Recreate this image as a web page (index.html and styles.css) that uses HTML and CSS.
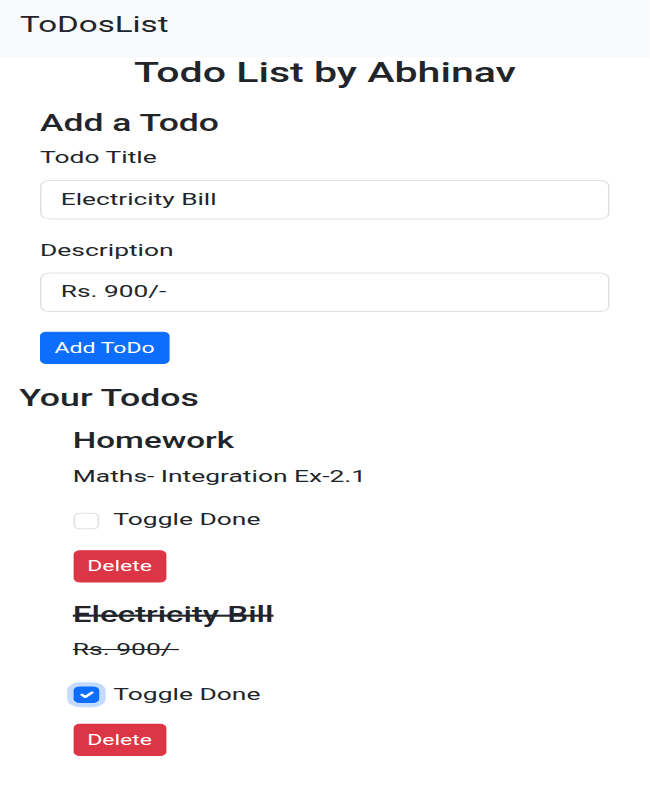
FILE: index.html
```html
<!DOCTYPE html>
<html lang="en">
<head>
<meta charset="utf-8">
<title>ToDosList</title>
<link rel="stylesheet" href="styles.css">
</head>
<body>
<div class="page">
  <nav class="navbar">
    <span class="brand">ToDosList</span>
  </nav>
  <h1 class="page-title">Todo List by Abhinav</h1>
  <section class="add-form">
    <h4 class="heading">Add a Todo</h4>
    <div class="field">
      <label class="label" for="title">Todo Title</label>
      <input class="input" id="title" type="text" value="Electricity Bill">
    </div>
    <div class="field">
      <label class="label" for="desc">Description</label>
      <input class="input" id="desc" type="text" value="Rs. 900/-">
    </div>
    <button class="btn btn-primary">Add ToDo</button>
  </section>
  <section class="todos">
    <h4 class="heading">Your Todos</h4>
    <div class="todo-list">
      <div class="todo">
        <h4 class="heading todo-title">Homework</h4>
        <p class="todo-desc">Maths- Integration Ex-2.1</p>
        <div class="check-row">
          <span class="check"></span>
          <span class="check-label">Toggle Done</span>
        </div>
        <button class="btn btn-danger">Delete</button>
      </div>
      <div class="todo done">
        <h4 class="heading todo-title">Electricity Bill</h4>
        <p class="todo-desc">Rs. 900/-</p>
        <div class="check-row">
          <span class="check checked"><svg viewBox="0 0 20 20" width="16" height="16"><path d="m6 10 3 3 6-6" fill="none" stroke="#fff" stroke-width="3" stroke-linecap="round" stroke-linejoin="round"/></svg></span>
          <span class="check-label">Toggle Done</span>
        </div>
        <button class="btn btn-danger">Delete</button>
      </div>
    </div>
  </section>
</div>
</body>
</html>
```
FILE: styles.css
```css
html, body {
  margin: 0;
  padding: 0;
  overflow: hidden;
  background: #fff;
}
.page {
  width: 406.25px;
  height: 770px;
  transform: scale(1.6, 1.04);
  transform-origin: 0 0;
  font-family: Roboto, "Noto Sans", sans-serif;
  font-size: 16px;
  line-height: 1.5;
  color: #212529;
}
.navbar {
  background: #f8f9fa;
  padding: 4px 12px 11px 12.5px;
}
.brand {
  display: block;
  font-size: 20.7px;
  line-height: 30px;
  padding: 5px 0 5px;
}
.page-title {
  margin: 0;
  text-align: center;
  font-size: 25.7px;
  font-weight: 500;
  line-height: 31px;
}
.heading {
  margin: 0;
  font-size: 22.2px;
  font-weight: 500;
  line-height: 26px;
}
.add-form {
  padding: 0 25px;
  margin-top: 18.8px;
}
.add-form .heading {
  margin-bottom: 9px;
}
.field {
  display: flex;
  flex-direction: column;
  margin-bottom: 18px;
}
.label {
  font-size: 16.5px;
  line-height: 24px;
  margin-bottom: 9px;
}
.input {
  box-sizing: border-box;
  height: 38px;
  padding: 6px 12px;
  border: 1px solid #dee2e6;
  border-radius: 6px;
  font-family: inherit;
  font-size: 16.4px;
  color: #212529;
  background: #fff;
  outline: none;
}
.field:last-of-type {
  margin-bottom: 19px;
}
.btn {
  display: inline-block;
  font-family: inherit;
  font-size: 14.4px;
  line-height: 21px;
  padding: 4px 8px;
  border: 1px solid transparent;
  border-radius: 4px;
  color: #fff;
  cursor: pointer;
}
.btn-primary {
  background: #0d6efd;
  border-color: #0d6efd;
}
.btn-danger {
  background: #dc3545;
  border-color: #dc3545;
}
.todos {
  padding: 0 12px;
  margin-top: 19.5px;
}
.todos > .heading {
  font-size: 22.3px;
}
.todo-list {
  padding-left: 33.5px;
  margin-top: 15.3px;
}
.todo {
  margin-bottom: 18.5px;
}
.todo-title {
  font-size: 20.7px;
  margin-bottom: 9px;
}
.todo-desc {
  margin: 0 0 19px;
  font-size: 16.5px;
  line-height: 24px;
}
.check-row {
  display: flex;
  align-items: center;
  height: 24px;
  margin-bottom: 16px;
}
.check {
  box-sizing: border-box;
  width: 16px;
  height: 16px;
  border: 1px solid #dee2e6;
  border-radius: 4px;
  margin-right: 9.3px;
  display: flex;
  align-items: center;
  justify-content: center;
}
.check svg {
  display: block;
}
.check.checked {
  background: #0d6efd;
  border-color: #0d6efd;
  box-shadow: 0 0 0 4px rgba(13, 110, 253, 0.25);
}
.check-label {
  font-size: 16.5px;
}
.done .todo-title,
.done .todo-desc {
  text-decoration: line-through;
}
```
